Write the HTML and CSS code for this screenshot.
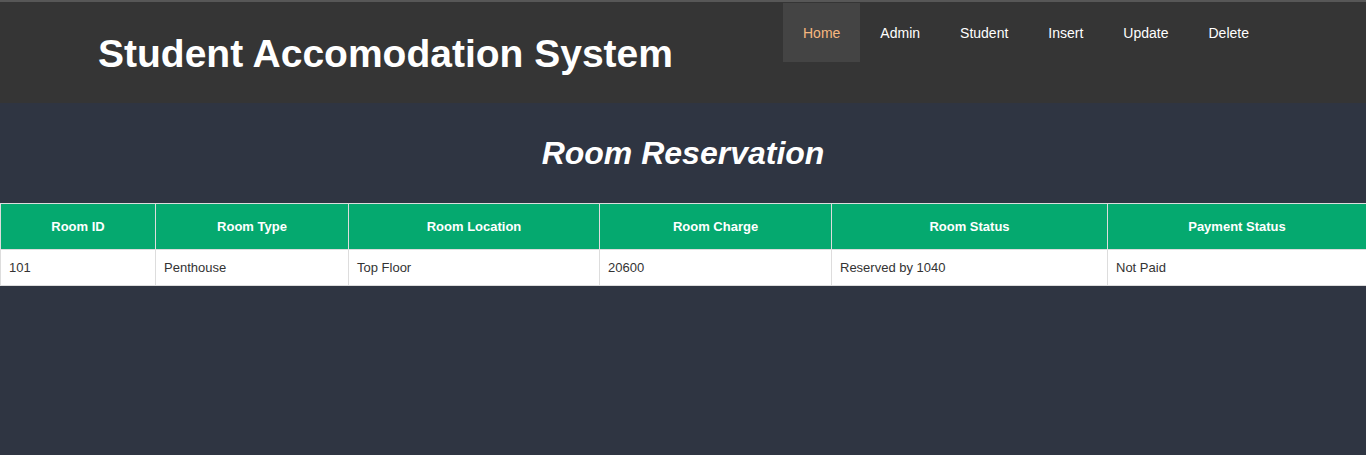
FILE: index.html
```html
<!DOCTYPE html>
<html>
<head>
<meta charset="utf-8">
<link rel="stylesheet" href="styles.css">
</head>
<body>
<header class="topbar">
  <h1 class="brand">Student Accomodation System</h1>
  <nav class="nav">
    <a class="nav-item active" href="#">Home</a>
    <a class="nav-item" href="#">Admin</a>
    <a class="nav-item" href="#">Student</a>
    <a class="nav-item" href="#">Insert</a>
    <a class="nav-item" href="#">Update</a>
    <a class="nav-item" href="#">Delete</a>
  </nav>
</header>
<main class="content">
  <h2 class="page-title">Room Reservation</h2>
  <table class="rooms">
    <colgroup>
      <col class="c1"><col class="c2"><col class="c3"><col class="c4"><col class="c5"><col class="c6">
    </colgroup>
    <thead>
      <tr>
        <th>Room ID</th><th>Room Type</th><th>Room Location</th><th>Room Charge</th><th>Room Status</th><th>Payment Status</th>
      </tr>
    </thead>
    <tbody>
      <tr>
        <td>101</td><td>Penthouse</td><td>Top Floor</td><td>20600</td><td>Reserved by 1040</td><td>Not Paid</td>
      </tr>
    </tbody>
  </table>
</main>
</body>
</html>
```
FILE: styles.css
```css
html, body {
  margin: 0;
  padding: 0;
}
body {
  background: #2f3542;
  font-family: "Liberation Sans", Arial, sans-serif;
  height: 455px;
  overflow: hidden;
}
.topbar {
  background: #353535;
  border-top: 2px solid #575757;
  height: 103px;
  display: flex;
  align-items: flex-start;
  box-sizing: border-box;
}
.brand {
  margin: 0;
  padding: 31px 0 0 98px;
  color: #fff;
  font-size: 39px;
  font-weight: bold;
  line-height: 42px;
  width: 783px;
  box-sizing: border-box;
  white-space: nowrap;
}
.nav {
  display: flex;
  margin-top: 1px;
}
.nav-item {
  display: block;
  color: #fff;
  text-decoration: none;
  font-size: 14px;
  padding: 0 20px;
  height: 59px;
  line-height: 60px;
  box-sizing: border-box;
}
.nav-item.active {
  background: #444;
  color: #f6b77f;
}
.content {
  padding-top: 32px;
}
.page-title {
  margin: 0 0 31px;
  text-align: center;
  color: #fff;
  font-size: 32px;
  font-style: italic;
  font-weight: bold;
  line-height: 37px;
}
.rooms {
  width: 1366px;
  border-collapse: collapse;
  table-layout: fixed;
  border: 1px solid #ddd;
  font-size: 13px;
}
.c1 { width: 155px; }
.c2 { width: 193px; }
.c3 { width: 251px; }
.c4 { width: 232px; }
.c5 { width: 276px; }
.c6 { width: 259px; }
.rooms th {
  background: #05a96f;
  color: #fff;
  font-weight: bold;
  height: 45px;
  padding: 0 8px;
  border: 1px solid #ddd;
  border-top: none;
  text-align: center;
}
.rooms td {
  background: #fff;
  color: #333;
  height: 35px;
  padding: 0 8px;
  border: 1px solid #ddd;
  text-align: left;
}
```
